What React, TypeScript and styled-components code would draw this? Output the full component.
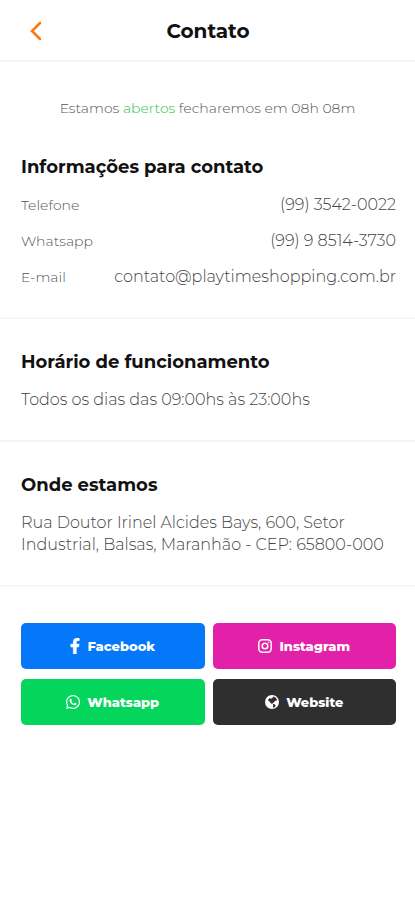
import React from "react";
import styled, { createGlobalStyle } from "styled-components";
import { FaFacebookF, FaWhatsapp } from "react-icons/fa";

const GlobalStyle = createGlobalStyle`
  *, *::before, *::after { box-sizing: border-box; }
  body {
    margin: 0;
    background: #fff;
    color: #444;
    font-family: Montserrat, Inter, sans-serif;
  }
  h1, h2, p, dl, dt, dd { margin: 0; }
`;

const Page = styled.div`
  min-height: 100vh;
  background: #fff;
`;

const Header = styled.header`
  display: grid;
  grid-template-columns: 32px 1fr 32px;
  align-items: center;
  height: 62px;
  padding: 2px 19px 0 20px;
  border-bottom: 2px solid #f6f6f6;
`;

const BackButton = styled.button`
  display: flex;
  align-items: center;
  justify-content: center;
  height: 32px;
  padding: 0;
  border: 0;
  background: none;
  color: #f97b16;
  cursor: pointer;
`;

const Title = styled.h1`
  color: #111;
  font-size: 20px;
  font-weight: 700;
  line-height: 28px;
  text-align: center;
`;

const Status = styled.p`
  padding: 36px 20px 6px;
  color: #555;
  font-size: 14px;
  font-weight: 300;
  line-height: 20px;
  text-align: center;
`;

const Open = styled.span`
  color: #2fbf3f;
`;

const Section = styled.section`
  padding: 30px 19px 29px 21px;
  border-bottom: 2px solid #f6f6f6;
`;

const Heading = styled.h2`
  color: #111;
  font-size: 18px;
  font-weight: 700;
  line-height: 26px;
`;

const Text = styled.p`
  padding-top: 14px;
  font-size: 16px;
  font-weight: 300;
  line-height: 22px;
`;

const Contacts = styled.dl`
  display: grid;
  gap: 14px;
  padding-top: 14px;
`;

const Contact = styled.div`
  display: flex;
  align-items: center;
  justify-content: space-between;
  line-height: 22px;
`;

const Label = styled.dt`
  color: #555;
  font-size: 14px;
  font-weight: 300;
`;

const Value = styled.dd`
  font-size: 16px;
  font-weight: 300;
`;

const Links = styled.nav`
  display: grid;
  grid-template-columns: 1fr 1fr;
  gap: 10px 8px;
  padding: 36px 19px 36px 21px;
`;

const LinkButton = styled.a<{ $color: string }>`
  display: flex;
  align-items: center;
  justify-content: center;
  gap: 7px;
  height: 46px;
  border-radius: 5px;
  background: ${(p) => p.$color};
  color: #fff;
  font-size: 13px;
  font-weight: 800;
  text-decoration: none;

  svg {
    flex: none;
  }
`;

const FacebookIcon = styled(FaFacebookF)`
  width: 10px;
  height: 16px;
  stroke: currentColor;
  stroke-width: 14;
`;

const WhatsappIcon = styled(FaWhatsapp)`
  width: 14px;
  height: 16px;
`;

const InstagramIcon = () => (
  <svg width="14" height="14" viewBox="0 0 14 14" fill="none" stroke="currentColor" strokeWidth="1.5" aria-hidden="true">
    <rect x=".8" y=".8" width="12.4" height="12.4" rx="3.4" />
    <circle cx="7" cy="7" r="2.8" />
    <circle cx="10.7" cy="3.3" r=".8" fill="currentColor" stroke="none" />
  </svg>
);

const GlobeIcon = () => (
  <svg width="14" height="14" viewBox="0.5 0.5 15 15" fill="currentColor" fillRule="evenodd" aria-hidden="true">
    <path d="M8 .5a7.5 7.5 0 1 0 0 15a7.5 7.5 0 0 0 0-15ZM9.5 2.2l2.2 1 1.6 1.8-.6 1.6-1.7.2-.7 1.4-1.5.8-.6 1.2-1.800-1-1-1.800-1.600-.9.500-1.600 1.500-1.200 1 .8 1.500-.4.300-.9ZM9 10.200l1.900.3 1 1.200-.9 1.600-1.600 1-.3-2Z" />
  </svg>
);

const contacts = [
  ["Telefone", "(99) 3542-0022"],
  ["Whatsapp", "(99) 9 8514-3730"],
  ["E-mail", "contato@playtimeshopping.com.br"],
];

const links = [
  { label: "Facebook", color: "#0578fa", Icon: FacebookIcon },
  { label: "Instagram", color: "#e321a8", Icon: InstagramIcon },
  { label: "Whatsapp", color: "#04d65c", Icon: WhatsappIcon },
  { label: "Website", color: "#2f2f2f", Icon: GlobeIcon },
];

export default function App() {
  return (
    <Page>
      <GlobalStyle />
      <Header>
        <BackButton type="button" aria-label="Voltar">
          <svg width="12" height="20" viewBox="0 0 12 20" fill="none" stroke="currentColor" strokeWidth="2.6" strokeLinecap="round" strokeLinejoin="miter" aria-hidden="true">
            <path d="M10 2 2 10l8 8" />
          </svg>
        </BackButton>
        <Title>Contato</Title>
      </Header>
      <main>
        <Status>
          Estamos <Open>abertos</Open> fecharemos em 08h 08m
        </Status>
        <Section>
          <Heading>Informações para contato</Heading>
          <Contacts>
            {contacts.map(([label, value]) => (
              <Contact key={label}>
                <Label>{label}</Label>
                <Value>{value}</Value>
              </Contact>
            ))}
          </Contacts>
        </Section>
        <Section>
          <Heading>Horário de funcionamento</Heading>
          <Text>Todos os dias das 09:00hs às 23:00hs</Text>
        </Section>
        <Section>
          <Heading>Onde estamos</Heading>
          <Text>Rua Doutor Irinel Alcides Bays, 600, Setor Industrial, Balsas, Maranhão - CEP: 65800-000</Text>
        </Section>
        <Links>
          {links.map(({ label, color, Icon }) => (
            <LinkButton key={label} href="#" $color={color}>
              <Icon />
              {label}
            </LinkButton>
          ))}
        </Links>
      </main>
    </Page>
  );
}
